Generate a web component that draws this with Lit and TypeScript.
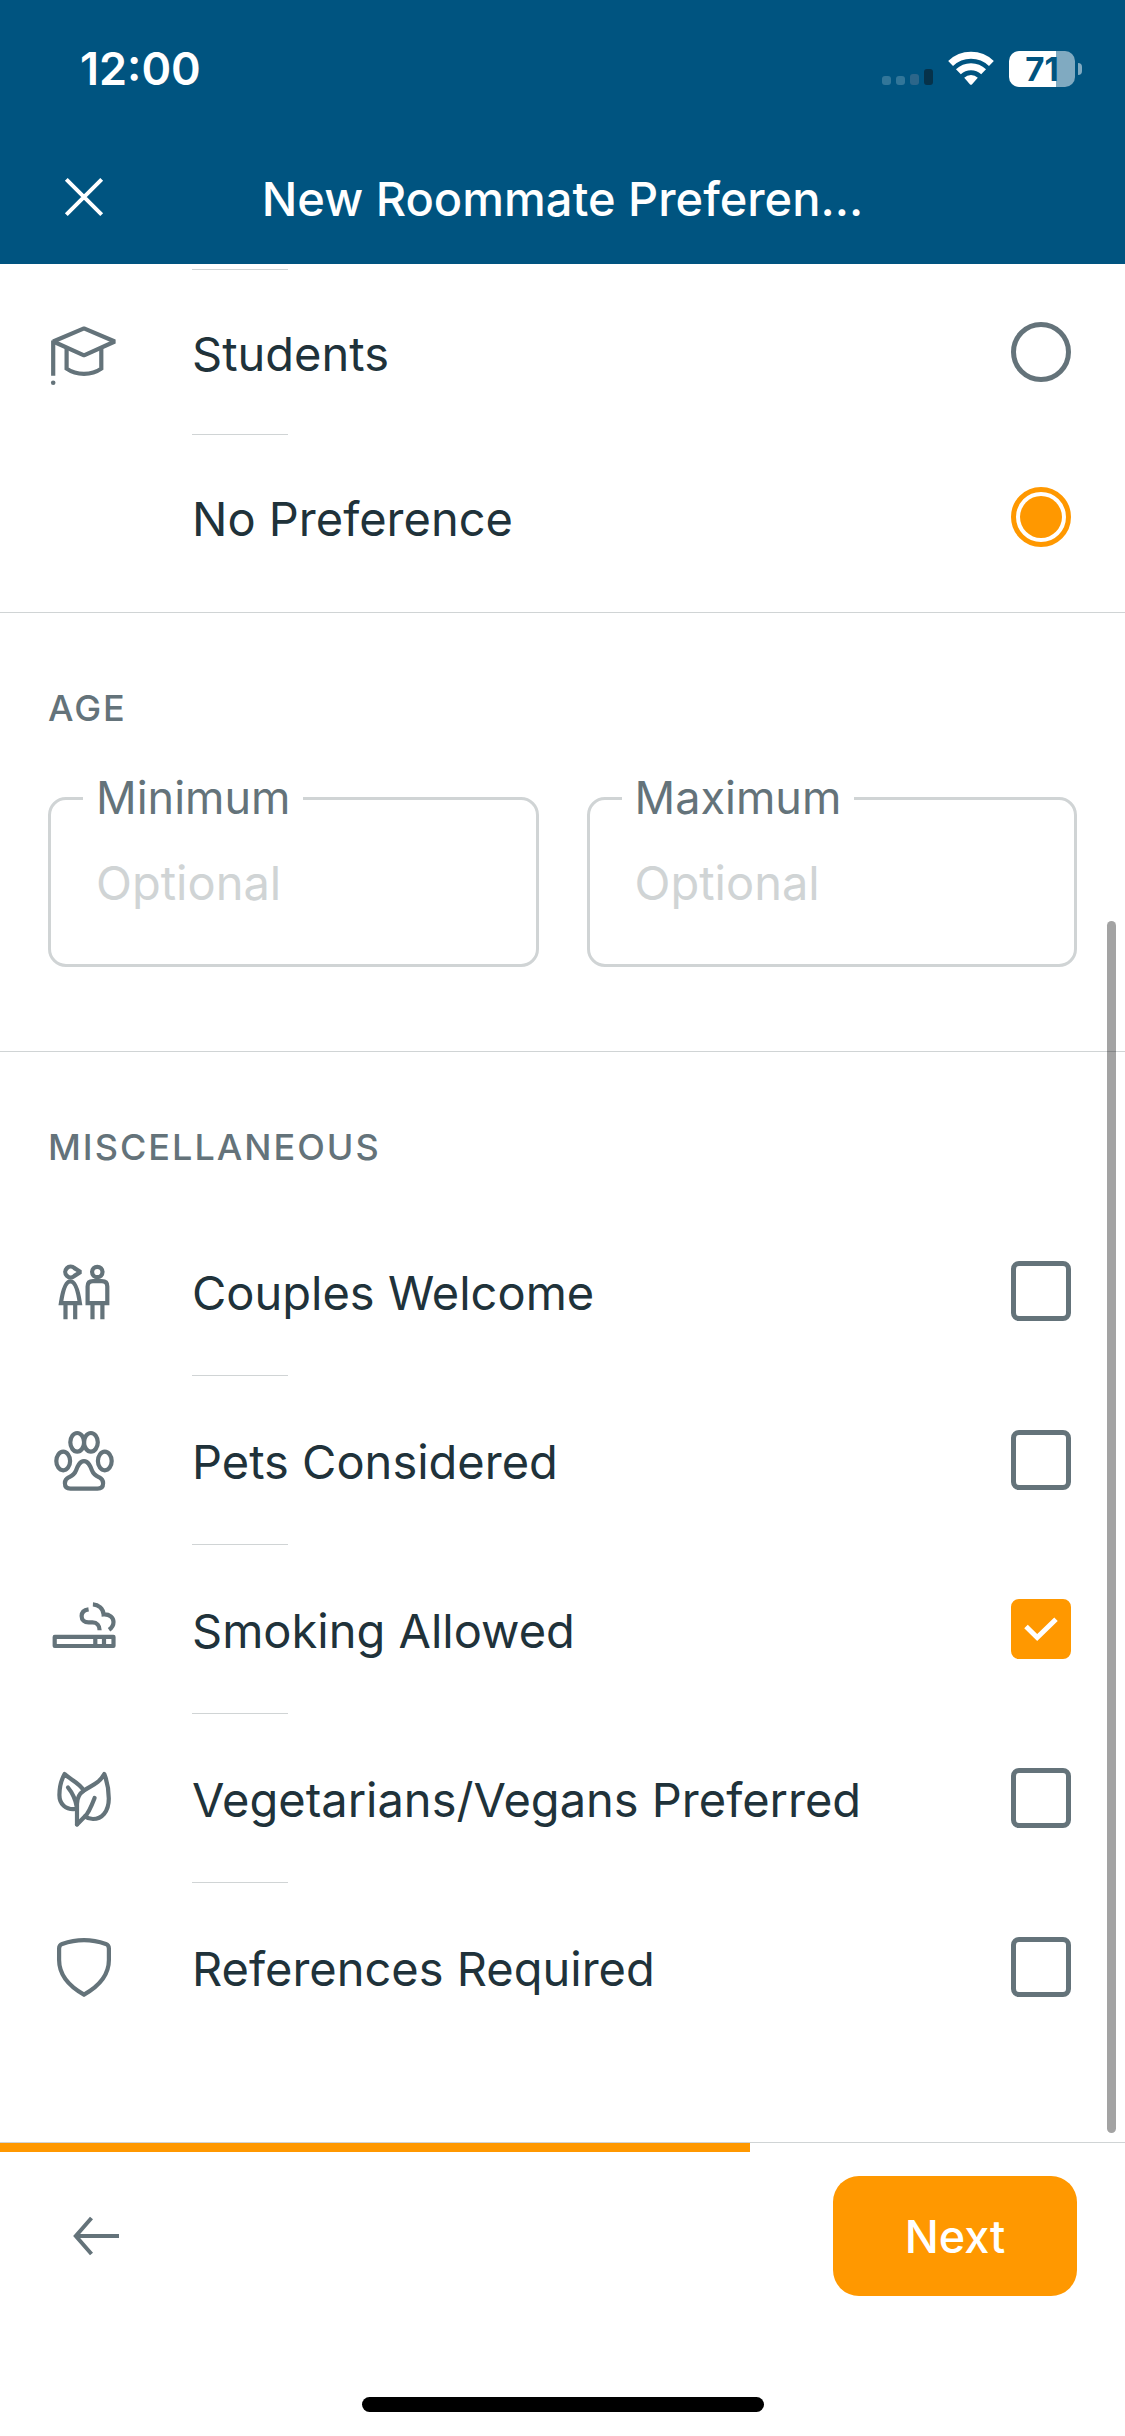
import { LitElement, html, svg, css, nothing, type TemplateResult, type SVGTemplateResult } from "lit";
import { customElement, property, state } from "lit/decorators.js";

type IconName = "students" | "couple" | "paw" | "smoking" | "leaves" | "shield";

interface Option {
  id: string;
  label: string;
  icon?: IconName;
}

const occupations: Option[] = [
  { id: "students", label: "Students", icon: "students" },
  { id: "any", label: "No Preference" },
];

const extras: Option[] = [
  { id: "couples", label: "Couples Welcome", icon: "couple" },
  { id: "pets", label: "Pets Considered", icon: "paw" },
  { id: "smoking", label: "Smoking Allowed", icon: "smoking" },
  { id: "vegan", label: "Vegetarians/Vegans Preferred", icon: "leaves" },
  { id: "references", label: "References Required", icon: "shield" },
];

const glyphs: Record<IconName, SVGTemplateResult> = {
  students: svg`
    <path d="M5.2 25.5 36 12.4 66.8 25.5 36 39.3Z" stroke-linejoin="bevel"/>
    <path d="M5.2 24.5V59.7M18.6 32.5V52.6Q26 57.8 36 57.8T53.3 52.6V32.5"/>
    <circle cx="5.2" cy="66.7" r="2.3" fill="currentColor" stroke="none"/>`,
  couple: svg`
    <path d="M32.6 17 26.4 13.1A5.4 5.4 0 1 0 26.4 20.9Z" stroke-linejoin="bevel"/>
    <path d="M12.9 48.2C14.6 36.5 17.5 26.3 22.4 26.3S30.2 36.5 31.9 48.2ZM17.5 48V64.3M27.2 48V64.3"/>
    <circle cx="49.3" cy="17" r="5.2"/>
    <path d="M39.6 48.2V31.5Q39.6 26.2 45 26.2H53.8Q59.3 26.2 59.3 31.5V48.2ZM44.5 48V64.3M54.4 48V64.3"/>`,
  paw: svg`
    <ellipse cx="29.2" cy="18.3" rx="6.9" ry="9.3"/>
    <ellipse cx="42.9" cy="18.3" rx="6.9" ry="9.3"/>
    <ellipse cx="15.2" cy="37" rx="6.9" ry="9.3"/>
    <ellipse cx="56.8" cy="37" rx="6.9" ry="9.3"/>
    <path d="M36 37.2C40.5 37.2 42.3 42 44 46.5C45.6 50.8 48 51.8 51 53.2C53.6 54.4 55.1 56.5 55.1 59.2C55.1 62.6 53 64.6 49.5 64.6H22.5C19 64.6 16.9 62.6 16.9 59.2C16.9 56.5 18.4 54.4 21 53.2C24 51.8 26.4 50.8 28 46.5C29.7 42 31.5 37.2 36 37.2Z"/>`,
  smoking: svg`
    <path d="M6.7 43.9H65.5V53H6.7ZM47.3 43.9V53M56 43.9V53" stroke-linejoin="round"/>
    <path d="M40.6 16.3C36 17 33.6 19.6 33.6 23C33.6 27 36.4 29.4 40.6 29.4H44.5C49 29.4 51.6 32.5 51.6 37.2M44.9 11.3C50.5 11.6 55.2 15.5 55.6 21.4C61.5 21 65.5 24.4 65.5 29C65.5 32.4 64 34.8 61 36.8"/>`,
  leaves: svg`
    <g stroke-linejoin="round" stroke-linecap="round">
      <path d="M27.5 47C17.5 48 11.4 42 11.4 33C11.4 25 13.5 17.5 16.6 12C22 17.5 31 20.5 35.8 28.5"/>
      <path d="M29 62.5V42C29 36 31.5 31.5 36 28.5C44.5 23 51 21.5 56.3 12C59 19 60.8 28 60.8 36.5C60.8 50 53.5 57 45 57C42 57 39.5 56.3 37 54.5"/>
      <path d="M20 25.5C24.5 31 27.5 37.5 28.8 45M46.6 36C43.5 44 40.5 51.5 36.8 54.5L29 62.5"/>
    </g>`,
  shield: svg`
    <path d="M14.2 12.9C28 8 44 8 57.8 12.9Q60.9 14.1 60.9 17.5V29C60.9 44.5 49.5 56 36 63.6C22.5 56 11.1 44.5 11.1 29V17.5Q11.1 14.1 14.2 12.9Z"/>`,
};

@customElement("option-row")
class OptionRow extends LitElement {
  @property() type: "radio" | "checkbox" = "checkbox";
  @property({ attribute: false }) option!: Option;
  @property({ type: Boolean }) checked = false;

  static styles = css`
    :host {
      display: block;
    }
    .row {
      display: grid;
      grid-template-columns: 72px 1fr 60px;
      column-gap: 72px;
      align-items: center;
      height: 100%;
      padding: 0 54px 0 48px;
      box-sizing: border-box;
      cursor: pointer;
    }
    .icon {
      display: block;
      width: 72px;
      height: 72px;
      color: #64737a;
      fill: none;
      stroke: currentColor;
      stroke-width: 4.2;
    }
    .label {
      padding-top: 3px;
      white-space: nowrap;
    }
    .control {
      display: grid;
    }
    .box,
    .tick {
      grid-area: 1 / 1;
    }
    .box {
      appearance: none;
      width: 60px;
      height: 60px;
      margin: 0;
      padding: 4px;
      box-sizing: border-box;
      border: 5px solid #64737a;
      border-radius: 8px;
      cursor: inherit;
    }
    .box.radio {
      border-radius: 50%;
    }
    .box:checked {
      border-color: #ff9800;
      background: #ff9800;
    }
    .box.radio:checked {
      background-clip: content-box;
    }
    .tick {
      width: 60px;
      height: 60px;
      fill: none;
      stroke: #fff;
      stroke-width: 5;
      pointer-events: none;
    }
  `;

  private toggle(event: Event) {
    const checked = (event.target as HTMLInputElement).checked;
    this.dispatchEvent(new CustomEvent("toggle-option", { detail: { id: this.option.id, checked } }));
  }

  render(): TemplateResult {
    const { label, icon } = this.option;
    return html`
      <label class="row">
        ${icon ? html`<svg class="icon" viewBox="0 0 72 72" aria-hidden="true">${glyphs[icon]}</svg>` : html`<span></span>`}
        <span class="label">${label}</span>
        <span class="control">
          <input class="box ${this.type}" type=${this.type} .checked=${this.checked} @change=${this.toggle} />
          ${this.type === "checkbox" && this.checked
            ? html`<svg class="tick" viewBox="0 0 60 60" aria-hidden="true"><path d="M15 27.5 26.2 38.6 45 20.3" /></svg>`
            : nothing}
        </span>
      </label>
    `;
  }
}

@customElement("status-bar")
class StatusBar extends LitElement {
  static styles = css`
    :host {
      display: flex;
      align-items: center;
      justify-content: space-between;
      height: 138px;
      padding: 0 43px 0 80px;
    }
    .time {
      font-size: 45px;
      font-weight: 600;
    }
    .icons {
      display: flex;
      align-items: center;
      gap: 15px;
    }
    .signal,
    .wifi {
      display: block;
    }
    .battery {
      display: flex;
      align-items: center;
      gap: 3px;
    }
    .cell {
      display: grid;
      place-items: center;
      width: 66px;
      height: 36px;
      border-radius: 10px;
      background: linear-gradient(to right, #fff 71%, #80aac1 71%);
      color: #005480;
      font-size: 33px;
      line-height: 36px;
      font-weight: 700;
    }
    .nub {
      width: 4px;
      height: 12px;
      border-radius: 0 6px 6px 0;
      background: #80aac1;
    }
  `;

  render(): TemplateResult {
    return html`
      <span class="time">12:00</span>
      <span class="icons">
        <svg class="signal" width="51" height="36" viewBox="0 0 51 36" aria-hidden="true">
          <rect x="0" y="25" width="9" height="9" rx="3" fill="#327699" />
          <rect x="14" y="25" width="9" height="9" rx="3" fill="#327699" />
          <rect x="28" y="23" width="9" height="11" rx="3" fill="#2c668a" />
          <rect x="42" y="18" width="9" height="16" rx="3" fill="#06324a" />
        </svg>
        <svg class="wifi" width="46" height="36" viewBox="0 0 46 36" aria-hidden="true">
          <g fill="none" stroke="#fff" stroke-width="7">
            <path d="M2.6 12.5A29.5 29.5 0 0 1 43.4 12.5" />
            <path d="M10.4 20.7A18.2 18.2 0 0 1 35.6 20.7" />
          </g>
          <path d="M16.2 26.8A9.6 9.6 0 0 1 29.8 26.8L23.9 33.4Q23 34.3 22.1 33.4Z" fill="#fff" />
        </svg>
        <span class="battery">
          <span class="cell">71</span>
          <span class="nub"></span>
        </span>
      </span>
    `;
  }
}

@customElement("app-root")
class AppRoot extends LitElement {
  @state() private occupation = "any";
  @state() private chosen = new Set<string>(["smoking"]);
  private progress = 2 / 3;

  static styles = css`
    :host {
      display: flex;
      flex-direction: column;
      min-height: 100vh;
      background: #fff;
      color: #20323a;
      font-family: Inter, "Liberation Sans", sans-serif;
      font-size: 47px;
      line-height: 60px;
    }
    .header {
      background: #005480;
      color: #fff;
    }
    .nav {
      display: grid;
      grid-template-columns: 72px 1fr 72px;
      column-gap: 48px;
      align-items: center;
      height: 126px;
      padding: 0 48px 8px;
      box-sizing: border-box;
    }
    .title {
      margin: 0;
      padding-top: 4px;
      font-size: 47px;
      font-weight: 500;
      text-align: center;
      white-space: nowrap;
    }
    .icon-button {
      display: block;
      width: 72px;
      height: 72px;
      padding: 0;
      border: 0;
      background: none;
      color: inherit;
    }
    .icon-button svg {
      display: block;
      fill: none;
      stroke: currentColor;
      stroke-width: 4;
    }
    .content {
      position: relative;
      flex: 1;
      padding-top: 5px;
    }
    .scroll-thumb {
      position: absolute;
      top: 35%;
      right: 9px;
      bottom: 9px;
      width: 9px;
      border-radius: 5px;
      background: rgba(0, 0, 0, 0.36);
    }
    .section {
      border-bottom: 1px solid #d0d4d5;
    }
    .section.last {
      border-bottom: 0;
      padding-bottom: 90px;
    }
    .occupations {
      padding-bottom: 13px;
    }
    .divider {
      width: 96px;
      height: 1px;
      margin: 0 0 0 192px;
      border: 0;
      background: #d0d4d5;
    }
    .radio-row {
      height: 164px;
    }
    .check-row {
      height: 168px;
    }
    .heading {
      margin: 0;
      padding: 71px 48px 0;
      color: #64737a;
      font-size: 36px;
      line-height: 48px;
      font-weight: 500;
      letter-spacing: 2px;
      text-transform: uppercase;
    }
    .fields {
      display: grid;
      grid-template-columns: 1fr 1fr;
      gap: 48px;
      padding: 40px 48px 84px;
    }
    .field {
      min-width: 0;
      margin: 0;
      padding: 0 32px 24px;
      border: 3px solid #d0d4d5;
      border-radius: 18px;
    }
    .legend {
      padding: 0 13px;
      color: #64737a;
      font-size: 45px;
      line-height: 52px;
    }
    .input {
      display: block;
      width: 100%;
      height: 116px;
      padding: 0 13px;
      box-sizing: border-box;
      border: 0;
      outline: 0;
      background: none;
      color: inherit;
      font: inherit;
    }
    .input::placeholder {
      color: #d0d4d5;
      opacity: 1;
    }
    .misc-list {
      padding-top: 36px;
    }
    .footer {
      border-top: 1px solid #d0d4d5;
    }
    .progress {
      height: 9px;
    }
    .bar {
      height: 100%;
      background: #ff9800;
    }
    .actions {
      display: flex;
      align-items: center;
      justify-content: space-between;
      padding: 24px 48px 101px 60px;
    }
    .back {
      color: #64737a;
    }
    .next {
      height: 120px;
      padding: 2px 70px 0;
      min-width: 244px;
      border: 0;
      border-radius: 26px;
      background: #ff9800;
      color: #fff;
      font: inherit;
      font-size: 45px;
      font-weight: 500;
    }
    .home {
      width: 402px;
      height: 15px;
      margin: 0 auto 24px;
      border-radius: 8px;
      background: #000;
    }
  `;

  private toggleExtra(event: CustomEvent<{ id: string; checked: boolean }>) {
    const next = new Set(this.chosen);
    if (event.detail.checked) next.add(event.detail.id);
    else next.delete(event.detail.id);
    this.chosen = next;
  }

  private field(id: string, label: string): TemplateResult {
    return html`
      <fieldset class="field">
        <legend class="legend"><label for=${id}>${label}</label></legend>
        <input class="input" id=${id} type="text" inputmode="numeric" placeholder="Optional" />
      </fieldset>
    `;
  }

  render(): TemplateResult {
    return html`
      <header class="header">
        <status-bar></status-bar>
        <div class="nav">
          <button class="icon-button" aria-label="Close">
            <svg width="72" height="72" viewBox="0 0 72 72" aria-hidden="true"><path d="M18.3 18.3 53.7 53.7M53.7 18.3 18.3 53.7" /></svg>
          </button>
          <h1 class="title">New Roommate Preferen...</h1>
        </div>
      </header>

      <main class="content">
        <section class="section occupations">
          ${occupations.map(
            (option) => html`
              <hr class="divider" />
              <option-row
                class="radio-row"
                type="radio"
                .option=${option}
                .checked=${this.occupation === option.id}
                @toggle-option=${() => (this.occupation = option.id)}
              ></option-row>
            `
          )}
        </section>

        <section class="section">
          <h2 class="heading">Age</h2>
          <div class="fields">${this.field("age-min", "Minimum")} ${this.field("age-max", "Maximum")}</div>
        </section>

        <section class="section last">
          <h2 class="heading">Miscellaneous</h2>
          <div class="misc-list">
            ${extras.map(
              (option, index) => html`
                ${index > 0 ? html`<hr class="divider" />` : nothing}
                <option-row
                  class="check-row"
                  .option=${option}
                  .checked=${this.chosen.has(option.id)}
                  @toggle-option=${this.toggleExtra}
                ></option-row>
              `
            )}
          </div>
        </section>
        <div class="scroll-thumb"></div>
      </main>

      <footer class="footer">
        <div class="progress"><div class="bar" style="width: ${this.progress * 100}%"></div></div>
        <div class="actions">
          <button class="icon-button back" aria-label="Back">
            <svg width="72" height="72" viewBox="0 0 72 72" aria-hidden="true"><path d="M59 36H17M31.5 18 15.8 36 31.5 54" /></svg>
          </button>
          <button class="next">Next</button>
        </div>
        <div class="home"></div>
      </footer>
    `;
  }
}
